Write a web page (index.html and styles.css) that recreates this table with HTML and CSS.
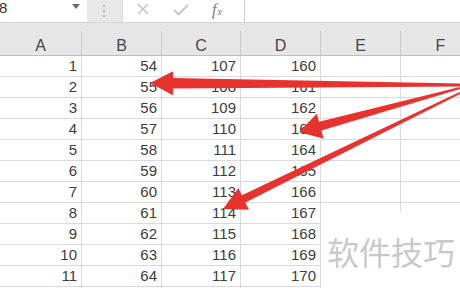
FILE: index.html
```html
<!DOCTYPE html>
<html lang="zh">
<head>
<meta charset="utf-8">
<link rel="stylesheet" href="styles.css">
</head>
<body>
<div class="sheet">
  <div class="fbar">
    <div class="namebox"><span class="ref">8</span><svg class="dd" width="8" height="5" viewBox="0 0 8 5"><path d="M0 0H8L4 5Z"/></svg></div>
    <div class="grip"><i></i><i></i><i></i></div>
    <div class="tools">
      <svg class="ic-x" width="12" height="12" viewBox="0 0 12 12"><path d="M1 1L11 11M11 1L1 11"/></svg>
      <svg class="ic-ok" width="16" height="12" viewBox="0 0 16 12"><path d="M1 6L5.5 10.5L15 1"/></svg>
      <span class="fx"><i>f</i><span class="sx">x</span></span>
    </div>
    <div class="input"></div>
  </div>
  <div class="row head"><div class="c">A</div><div class="c">B</div><div class="c">C</div><div class="c">D</div><div class="c">E</div><div class="c">F</div></div>
  <div class="row"><div class="c">1</div><div class="c">54</div><div class="c">107</div><div class="c">160</div><div class="c"></div><div class="c"></div></div>
  <div class="row"><div class="c">2</div><div class="c">55</div><div class="c">108</div><div class="c">161</div><div class="c"></div><div class="c"></div></div>
  <div class="row"><div class="c">3</div><div class="c">56</div><div class="c">109</div><div class="c">162</div><div class="c"></div><div class="c"></div></div>
  <div class="row"><div class="c">4</div><div class="c">57</div><div class="c">110</div><div class="c">163</div><div class="c"></div><div class="c"></div></div>
  <div class="row"><div class="c">5</div><div class="c">58</div><div class="c">111</div><div class="c">164</div><div class="c"></div><div class="c"></div></div>
  <div class="row"><div class="c">6</div><div class="c">59</div><div class="c">112</div><div class="c">165</div><div class="c"></div><div class="c"></div></div>
  <div class="row"><div class="c">7</div><div class="c">60</div><div class="c">113</div><div class="c">166</div><div class="c"></div><div class="c"></div></div>
  <div class="row"><div class="c">8</div><div class="c">61</div><div class="c">114</div><div class="c">167</div><div class="c"></div><div class="c"></div></div>
  <div class="row"><div class="c">9</div><div class="c">62</div><div class="c">115</div><div class="c">168</div><div class="c"></div><div class="c"></div></div>
  <div class="row"><div class="c">10</div><div class="c">63</div><div class="c">116</div><div class="c">169</div><div class="c"></div><div class="c"></div></div>
  <div class="row"><div class="c">11</div><div class="c">64</div><div class="c">117</div><div class="c">170</div><div class="c"></div><div class="c"></div></div>
  <div class="row"><div class="c"></div><div class="c"></div><div class="c"></div><div class="c"></div><div class="c"></div><div class="c"></div></div>
  <div class="wm">软件技巧</div>
  <svg class="arrows" width="460" height="288" viewBox="0 0 460 288">
    <polygon points="460,83.6 173.03,78 173.08,71.15 150,83 172.92,95.15 172.97,88.6 460,86.4"/>
    <polygon points="459.74,87.04 319.03,121.86 316.79,113.66 299,132 323.65,138.74 321.41,130.54 460.26,88.96"/>
    <polygon points="459.56,92.10 241.90,195.30 238.38,188.11 223,209 248.94,209.67 245.42,202.48 460.44,93.90"/>
  </svg>
</div>
</body>
</html>
```

FILE: styles.css
```css
html, body {
  margin: 0;
  padding: 0;
  background: #fff;
}
body {
  font-family: "Liberation Sans", Arial, sans-serif;
}
.sheet {
  position: relative;
  width: 460px;
  height: 288px;
  overflow: hidden;
  background: #fff;
}
.fbar {
  display: flex;
  height: 23px;
  box-sizing: border-box;
  border-bottom: 1px solid #d4d4d4;
  background: #fff;
}
.namebox {
  width: 87px;
  flex: none;
  display: flex;
  align-items: flex-start;
  justify-content: space-between;
  padding-right: 7px;
  box-sizing: border-box;
}
.ref {
  font-size: 15px;
  line-height: 16px;
  color: #333;
  margin-left: -1px;
}
.dd {
  margin-top: 4px;
  fill: #6a6a6a;
}
.grip {
  width: 35px;
  flex: none;
  background: #e8e8e8;
  display: flex;
  flex-direction: column;
  align-items: center;
  gap: 3px;
  padding-top: 5px;
  padding-right: 2px;
  box-sizing: border-box;
}
.grip i {
  display: block;
  width: 2px;
  height: 2px;
  background: #b4b4b4;
}
.tools {
  width: 123px;
  flex: none;
  box-sizing: border-box;
  border-left: 1px solid #dcdcdc;
  border-right: 1px solid #cdcdcd;
  display: flex;
  align-items: flex-start;
  padding-top: 3px;
}
.ic-x {
  margin-left: 14px;
  fill: none;
  stroke: #c4c4c4;
  stroke-width: 1.6;
}
.ic-ok {
  margin-left: 24px;
  margin-top: 1px;
  fill: none;
  stroke: #c4c4c4;
  stroke-width: 1.8;
}
.fx {
  margin-left: 23px;
  margin-top: -1px;
  font-family: "Liberation Serif", "Times New Roman", serif;
  color: #7a7a7a;
  font-size: 16px;
  line-height: 16px;
  white-space: nowrap;
}
.fx i {
  font-style: italic;
}
.fx .sx {
  font-size: 10px;
  font-style: italic;
  margin-left: 1px;
}
.input {
  flex: 1;
}
.row {
  display: grid;
  grid-template-columns: 82px 80px 79px 80px 80px 80px;
}
.head {
  background: #e6e6e6;
  padding-top: 8px;
  border-bottom: 1px solid #bdbdbd;
}
.head .c {
  height: 24px;
  box-sizing: border-box;
  border-right: 1px solid #c8c8c8;
  text-align: center;
  font-size: 16px;
  line-height: 19px;
  padding-top: 5px;
  color: #454545;
}
.row:not(.head) .c {
  height: 21px;
  box-sizing: border-box;
  border-right: 1px solid #dadada;
  border-bottom: 1px solid #dadada;
  text-align: right;
  padding-right: 4px;
  font-size: 15px;
  line-height: 20px;
  color: #3c3c3c;
}
.wm {
  position: absolute;
  left: 321px;
  top: 212px;
  right: 0;
  bottom: 0;
  background: #fff;
  padding: 22px 0 0 6px;
  font-family: "Noto Sans CJK SC", sans-serif;
  font-size: 32px;
  line-height: 34px;
  color: #c9c9c9;
  white-space: nowrap;
}
.arrows {
  position: absolute;
  left: 0;
  top: 0;
  fill: #e8322e;
}
```
